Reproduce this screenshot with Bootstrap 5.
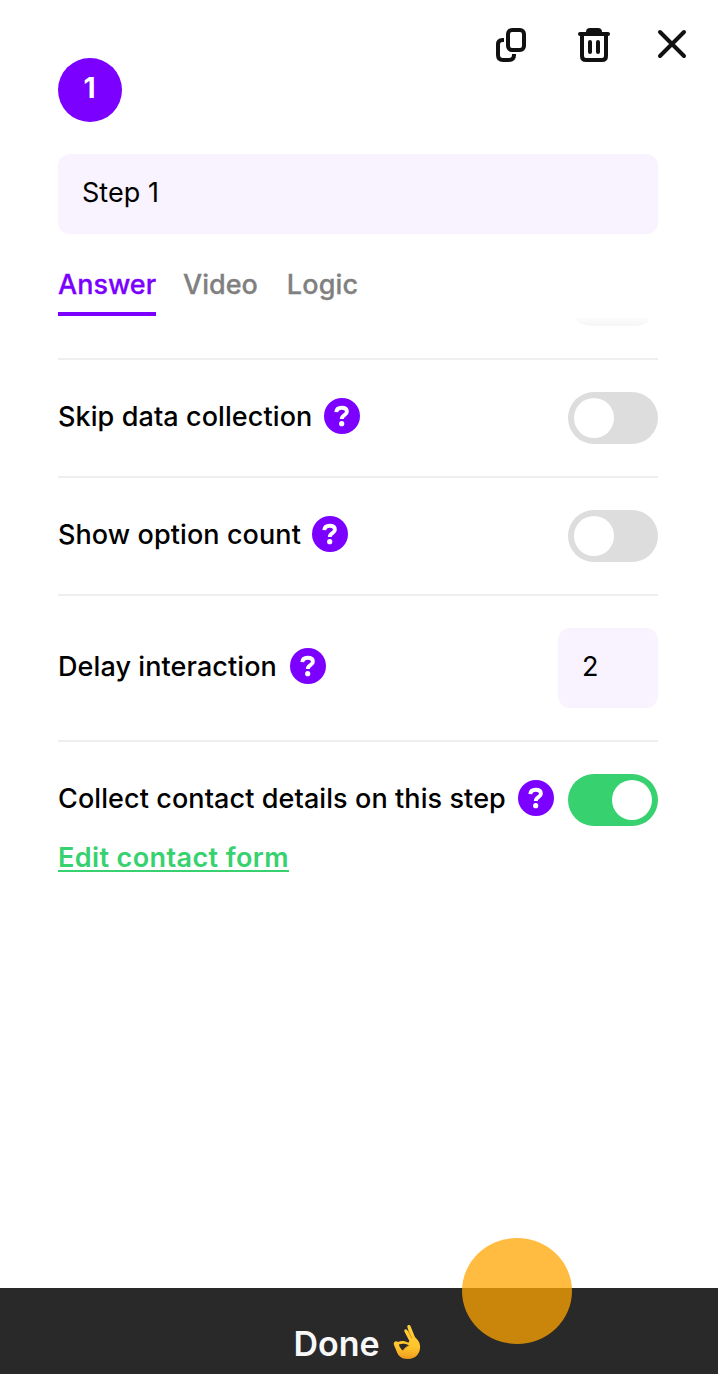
<!DOCTYPE html>
<html lang="en">
<head>
<meta charset="utf-8">
<meta name="viewport" content="width=device-width, initial-scale=1">
<title>Step 1</title>
<link href="https://cdn.jsdelivr.net/npm/bootstrap@5.3.0/dist/css/bootstrap.min.css" rel="stylesheet">
<style>
  :root { --violet: #7b00ff; --lilac: #f8f3ff; --leaf: #37d16f; }
  body { font-family: Inter, "Liberation Sans", sans-serif; color: #000; background: #fff; font-size: 27px; line-height: 34px; }
  .panel { width: 718px; height: 1374px; overflow: hidden; }
  .panel-body { padding: 0 60px 0 58px; }
  .head { height: 122px; margin-right: -29px; }
  .step-no { width: 64px; height: 64px; background: var(--violet); font-size: 28px; padding: 0 1px 4px 0; }
  .tool { background: none; border: 0; padding: 0; line-height: 0; }
  .tool-copy { margin-right: 52px; }
  .tool-trash { margin-right: 47px; }
  .field { height: 80px; background: var(--lilac); border: 0; border-radius: 12px; padding: 0 24px 3px; font-size: 27px; color: #000; }
  .field-name { margin-top: 32px; letter-spacing: .05px; }
  .field-num { width: 100px; }
  .tabs { margin-top: 34px; height: 48px; gap: 28px; }
  .tabs a { color: #808080; font-weight: 500; text-decoration: none; height: 48px; white-space: nowrap; -webkit-text-stroke: .3px; }
  .tabs a.active { color: var(--violet); border-bottom: 4px solid var(--violet); width: 98px; }
  .tabs a + a { margin-left: -1px; }
  .tabs a:last-child { margin-left: 1px; letter-spacing: .15px; }
  .peek { height: 42px; overflow: hidden; padding-right: 8px; }
  .peek span { width: 74px; height: 8px; margin-top: 2px; border-radius: 0 0 18px 18px / 0 0 8px 8px; background: linear-gradient(#fdfdfd, #f5f5f5); }
  .setting { height: 118px; border-top: 2px solid #efefef; }
  .setting.tall { height: 146px; }
  .label-text { font-weight: 500; white-space: nowrap; padding-bottom: 2px; letter-spacing: .09px; }
  .help { width: 36px; height: 36px; margin-top: -4px; }
  .toggle { width: 90px; height: 52px; padding: 6px; border-radius: 26px; background: #ddd; }
  .toggle i { width: 40px; height: 40px; border-radius: 50%; background: #fff; }
  .toggle.on { background: var(--leaf); justify-content: flex-end; }
  .edit { color: var(--leaf); font-weight: 600; white-space: nowrap; letter-spacing: .4px; border-bottom: 2px solid var(--leaf); line-height: 28px; height: 28px; text-decoration: none; margin-top: -14px; }
  .edit:hover { color: var(--leaf); }
  .done { height: 86px; background: #292929; color: #f8f8f8; font-size: 34px; font-weight: 600; padding-top: 25px; }
  .done-text { margin-top: 6px; }
  .ok-hand { margin: 11px 4px 0 13px; }
  .touch { left: 462px; top: -50px; width: 110px; height: 106px; border-radius: 50%; background: rgba(255,165,0,.75); }
</style>
</head>
<body>
<svg class="d-none" aria-hidden="true">
  <symbol id="help" viewBox="0 0 36 36">
    <circle cx="18" cy="18" r="18" fill="#7b00ff"/>
    <path d="M12.300 14.200c.2-2.900 2.300-4.400 5.400-4.400 3.200 0 5.200 1.500 5.200 4 0 3.700-5.100 3.200-5.100 7.200" fill="none" stroke="#fff" stroke-width="3.900"/>
    <circle cx="17.700" cy="25.700" r="2.600" fill="#fff"/>
  </symbol>
</svg>
<main class="panel d-flex flex-column">
  <div class="panel-body flex-grow-1">
    <header class="head d-flex justify-content-between align-items-start">
      <div class="step-no rounded-circle text-white fw-bold d-flex align-items-center justify-content-center align-self-end">1</div>
      <div class="d-flex align-items-start pt-4">
        <button class="tool tool-copy mt-1" aria-label="Duplicate"><svg width="30" height="34" fill="none" stroke="#111" stroke-width="4"><rect x="12" y="2" width="16" height="20" rx="4"/><path d="M8 12H6.500Q2 12 2 16.500V27q0 5 5 5h6q5 0 5-5v-1"/></svg></button>
        <button class="tool tool-trash mt-1" aria-label="Delete"><svg width="32" height="34" fill="none" stroke="#111" stroke-width="4" stroke-linecap="round"><path d="M2 6h28"/><path d="M4 7v21q0 4 4 4h16q4 0 4-4V7M12 14v10M20 14v10"/><path d="M8 6V4Q8 0 12 0h8q4 0 4 4v2z" fill="#111" stroke="none"/></svg></button>
        <button class="tool mt-1" aria-label="Close"><svg width="30" height="32" fill="none" stroke="#111" stroke-width="4" stroke-linecap="round"><path d="M3 4l24 24M27 4L3 28"/></svg></button>
      </div>
    </header>

    <input class="field field-name w-100 d-block" value="Step 1" aria-label="Step name">

    <nav class="tabs d-flex">
      <a href="#" class="active">Answer</a>
      <a href="#">Video</a>
      <a href="#">Logic</a>
    </nav>
    <div class="peek d-flex justify-content-end"><span></span></div>

    <section class="setting d-flex align-items-center">
      <span class="label-text" style="width:266px">Skip data collection</span>
      <svg class="help"><use href="#help"/></svg>
      <span class="toggle d-flex ms-auto"><i></i></span>
    </section>
    <section class="setting d-flex align-items-center">
      <span class="label-text" style="width:254px">Show option count</span>
      <svg class="help"><use href="#help"/></svg>
      <span class="toggle d-flex ms-auto"><i></i></span>
    </section>
    <section class="setting tall d-flex align-items-center">
      <span class="label-text" style="width:232px">Delay interaction</span>
      <svg class="help"><use href="#help"/></svg>
      <input class="field field-num ms-auto" value="2" aria-label="Delay in seconds">
    </section>
    <section class="setting d-flex align-items-center">
      <span class="label-text" style="width:460px">Collect contact details on this step</span>
      <svg class="help"><use href="#help"/></svg>
      <span class="toggle on d-flex ms-auto"><i></i></span>
    </section>
    <div class="d-flex"><a href="#" class="edit">Edit contact form</a></div>
  </div>

  <footer class="done position-relative d-flex justify-content-center align-items-start">
    <span class="done-text pt-2">Done</span>
    <svg class="ok-hand" width="28" height="37" viewBox="0 0 28 37" aria-label="OK hand">
      <defs><linearGradient id="skin" x1="0" y1="0" x2="0" y2="1"><stop offset="0" stop-color="#ffd13b"/><stop offset=".65" stop-color="#ffc52c"/><stop offset="1" stop-color="#ef9b1b"/></linearGradient></defs>
      <path d="M14.200 2.600c.3-2.100 2.700-2.300 3.400-.4l4.200 10.500c2.900 3.200 5.200 5.400 5.300 9.800.2 7-4.600 12.500-12.200 12.500-6.700 0-9.900-3.500-11-7L.8 20.500c-.7-2.200 2-4.200 4.200-2.600 3.100-1.500 7.200-1 10.300.8l1.100-1.600-5-9.700c-.7-2 1.700-3 2.900-1.200l1.700 2.300z" fill="url(#skin)"/>
      <path d="M5.900 20.600c3.200-1.300 7.500-.9 10.200.8-2.500 1.200-4.900 2.900-6.200 5-1.800-.6-3.400-3.300-4-5.800z" fill="#292929"/>
      <path d="M15.800 8l3.100 6.500M16.500 21.300c-2.200.9-5 2.700-6.300 5.200" fill="none" stroke="#d98b14" stroke-width="1"/>
    </svg>
    <span class="touch position-absolute"></span>
  </footer>
</main>
<script src="https://cdn.jsdelivr.net/npm/bootstrap@5.3.0/dist/js/bootstrap.bundle.min.js"></script>
</body>
</html>
